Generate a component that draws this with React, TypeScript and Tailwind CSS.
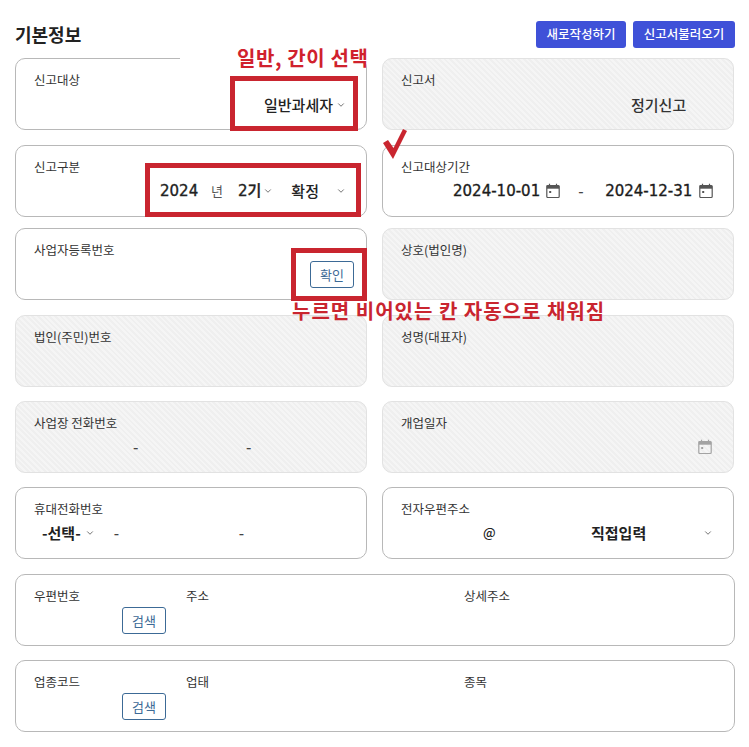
import type { ReactNode } from "react";
import { ChevronDown } from "lucide-react";

const Chev = ({ className = "" }: { className?: string }) => (
  <ChevronDown size={10} strokeWidth={1.8} className={`text-[#444] shrink-0 ${className}`} />
);

const CalendarIcon = ({ className = "" }: { className?: string }) => (
  <svg viewBox="0 0 16 16" width="16" height="16" fill="none" className={className}>
    <path d="M4.5 0.8v2.5M11.5 0.8v2.5" stroke="currentColor" strokeWidth="1.2" />
    <path d="M1.8 2.5h12.4v3.2H1.8z" fill="currentColor" />
    <rect x="1.8" y="2.5" width="12.4" height="12" rx="1" stroke="currentColor" strokeWidth="1.2" />
    <rect x="4.2" y="8" width="2" height="2" fill="currentColor" />
  </svg>
);

const Card = ({
  label,
  disabled,
  children,
}: {
  label: string;
  disabled?: boolean;
  children?: ReactNode;
}) => (
  <div
    className={
      disabled
        ? "h-[72px] rounded-[10px] border border-[#e2e2e2] bg-[#f3f3f3] bg-[repeating-linear-gradient(45deg,#efefef_0px,#efefef_2px,#f5f5f5_2px,#f5f5f5_4px)] pl-[18px] pt-[12px]"
        : "h-[72px] rounded-[10px] border border-[#b8b8b8] bg-white pl-[18px] pt-[12px]"
    }
  >
    <div className="h-[18px] text-[12.5px] leading-[18px] text-[#333]">{label}</div>
    {children}
  </div>
);

const SmallButton = ({ children, className = "" }: { children: ReactNode; className?: string }) => (
  <button
    className={`w-[44px] h-[27px] rounded-[3px] border border-[#3c6a96] bg-white text-[13px] leading-none text-[#3c6a96] ${className}`}
  >
    {children}
  </button>
);

const AddressCard = ({ labels, className = "" }: { labels: [string, string, string]; className?: string }) => (
  <div
    className={`grid h-[72px] grid-cols-[152px_278px_1fr] rounded-[10px] border border-[#b8b8b8] pl-[18px] pt-[12px] ${className}`}
  >
    <div>
      <div className="h-[18px] text-[12.5px] leading-[18px] text-[#333]">{labels[0]}</div>
      <SmallButton className="ml-[88px] mt-[2px] block">검색</SmallButton>
    </div>
    <div className="h-[18px] text-[12.5px] leading-[18px] text-[#333]">{labels[1]}</div>
    <div className="h-[18px] text-[12.5px] leading-[18px] text-[#333]">{labels[2]}</div>
  </div>
);

export default function App() {
  return (
    <div className="relative h-[747px] w-[749px] overflow-hidden bg-white font-['Noto_Sans_CJK_KR','Noto_Sans',sans-serif]">
      <div className="ml-[15px] w-[720px] pt-[21px]">
        {/* Header */}
        <div className="mb-[10px] flex h-[27px] items-center justify-between">
          <h1 className="text-[18px] font-bold leading-[27px] text-[#222]">기본정보</h1>
          <div className="flex gap-[7px]">
            <button className="h-[27px] w-[90px] rounded-[3px] bg-[#3f51d8] text-[12.5px] font-medium leading-none text-white">
              새로작성하기
            </button>
            <button className="h-[27px] w-[102px] rounded-[3px] bg-[#3f51d8] text-[12.5px] font-medium leading-none text-white">
              신고서불러오기
            </button>
          </div>
        </div>

        <div className="grid grid-cols-[352px_352px] gap-x-[15px]">
          <Card label="신고대상">
            <div className="mt-[4px] flex h-[24px] items-center text-[15px] font-medium text-[#222]">
              <span className="ml-[230px]">일반과세자</span>
              <Chev className="ml-[3px]" />
            </div>
          </Card>
          <Card label="신고서" disabled>
            <div className="mt-[4px] flex h-[24px] items-center pl-[230px] text-[15px] font-medium text-[#333]">
              정기신고
            </div>
          </Card>
        </div>

        <div className="mt-[15px] grid grid-cols-[352px_352px] gap-x-[15px]">
          <Card label="신고구분">
            <div className="mt-[3px] flex h-[24px] items-center text-[15px] font-medium text-[#222]">
              <span className="ml-[126px] w-[51px] font-['DejaVu_Sans','Noto_Sans_CJK_KR',sans-serif] [-webkit-text-stroke:0.35px_#222]">
                2024
              </span>
              <span className="w-[27px] text-[13px] font-normal text-[#555]">년</span>
              <span className="font-['DejaVu_Sans','Noto_Sans_CJK_KR',sans-serif] [-webkit-text-stroke:0.35px_#222]">
                2기
              </span>
              <Chev className="ml-[2px]" />
              <span className="ml-[18px]">확정</span>
              <Chev className="ml-[17px]" />
            </div>
          </Card>
          <Card label="신고대상기간">
            <div className="mt-[3px] flex h-[24px] items-center text-[15px] text-[#1c1c1c]">
              <span className="ml-[52px] font-['DejaVu_Sans',sans-serif] [-webkit-text-stroke:0.35px_#1c1c1c]">
                2024-10-01
              </span>
              <CalendarIcon className="ml-[5px] text-[#555]" />
              <span className="ml-[17px] w-[27px] font-medium text-[#444]">-</span>
              <span className="font-['DejaVu_Sans',sans-serif] [-webkit-text-stroke:0.35px_#1c1c1c]">
                2024-12-31
              </span>
              <CalendarIcon className="ml-[6px] text-[#555]" />
            </div>
          </Card>
        </div>

        <div className="mt-[11px] grid grid-cols-[352px_352px] gap-x-[15px]">
          <Card label="사업자등록번호">
            <div className="mt-[2px] pl-[276px]">
              <SmallButton className="block">확인</SmallButton>
            </div>
          </Card>
          <Card label="상호(법인명)" disabled />
        </div>

        <div className="mt-[15px] grid grid-cols-[352px_352px] gap-x-[15px]">
          <Card label="법인(주민)번호" disabled />
          <Card label="성명(대표자)" disabled />
        </div>

        <div className="mt-[14px] grid grid-cols-[352px_352px] gap-x-[15px]">
          <Card label="사업장 전화번호" disabled>
            <div className="mt-[3px] flex h-[24px] items-center text-[15px] font-medium text-[#444]">
              <span className="ml-[99px] w-[113px]">-</span>
              <span>-</span>
            </div>
          </Card>
          <Card label="개업일자" disabled>
            <div className="mt-[3px] flex h-[24px] items-center pl-[296px]">
              <CalendarIcon className="text-[#a3a3a3]" />
            </div>
          </Card>
        </div>

        <div className="mt-[14px] grid grid-cols-[352px_352px] gap-x-[15px]">
          <Card label="휴대전화번호">
            <div className="mt-[3px] flex h-[24px] items-center text-[15px] font-bold text-[#222]">
              <span className="ml-[8px]">-선택-</span>
              <Chev className="ml-[4px]" />
              <span className="ml-[19px] w-[125px] font-medium text-[#444]">-</span>
              <span className="font-medium text-[#444]">-</span>
            </div>
          </Card>
          <Card label="전자우편주소">
            <div className="mt-[3px] flex h-[24px] items-center text-[15px] font-bold text-[#222]">
              <span className="ml-[82px] w-[108px] text-[13px] font-medium">@</span>
              <span>직접입력</span>
              <Chev className="ml-[57px]" />
            </div>
          </Card>
        </div>

        <AddressCard labels={["우편번호", "주소", "상세주소"]} className="mt-[15px]" />
        <AddressCard labels={["업종코드", "업태", "종목"]} className="mt-[14px]" />
      </div>

      {/* Annotations pasted over the screenshot */}
      <div className="absolute left-[180px] top-[40px] h-[25px] w-[184px] bg-white" />
      <div className="absolute left-[230px] top-[76px] h-[55px] w-[128px] border-[5px] border-[#c9252f]" />
      <div className="absolute left-[145px] top-[163px] h-[54px] w-[216px] border-[5px] border-[#c9252f]" />
      <div className="absolute left-[291px] top-[248px] h-[53px] w-[76px] border-[5px] border-[#c9252f]" />
      <div className="absolute left-[237px] top-[45px] whitespace-nowrap text-[20px] font-bold leading-[26px] tracking-[0.6px] text-[#d0212d]">
        일반, 간이 선택
      </div>
      <div className="absolute left-[292px] top-[298px] whitespace-nowrap text-[20px] font-bold leading-[26px] tracking-[1px] text-[#c9252f]">
        누르면 비어있는 칸 자동으로 채워짐
      </div>
      <svg className="absolute left-[380px] top-[125px]" width="30" height="36" viewBox="0 0 30 36">
        <polygon points="3,18 8,15 13.5,23 23,4 27,6 13,34" fill="#c9252f" />
      </svg>
    </div>
  );
}
